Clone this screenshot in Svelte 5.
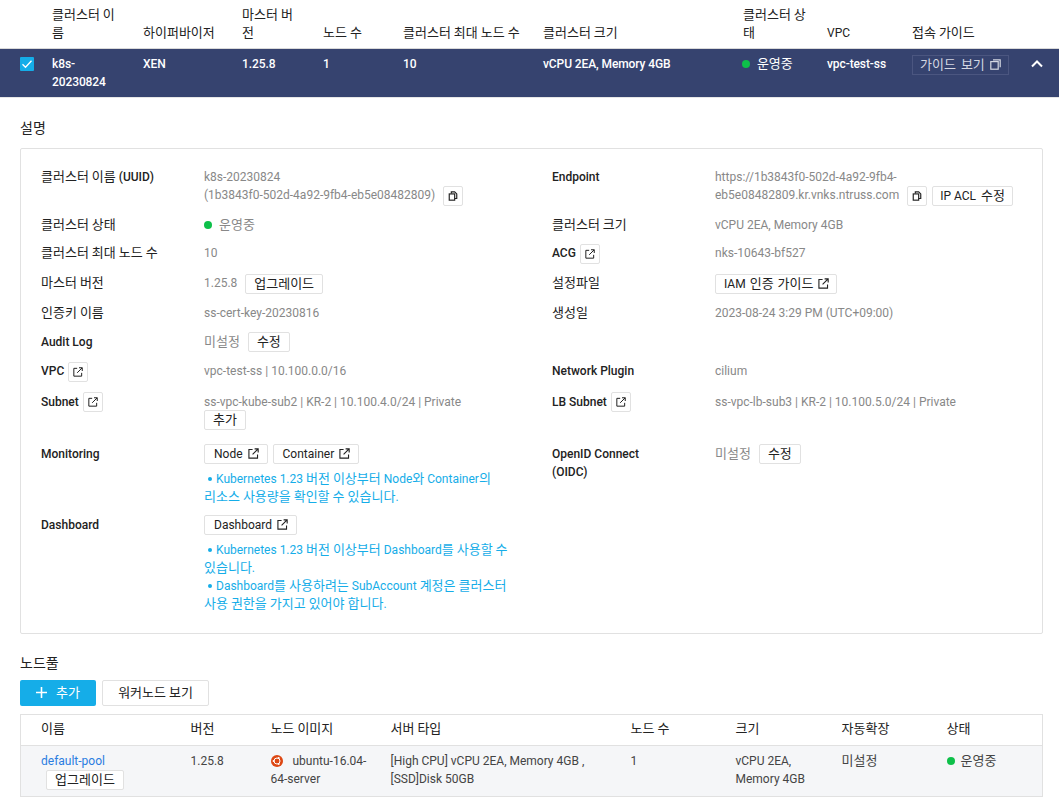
<script>
  const columns = [
    { label: '클러스터 이름', value: 'k8s-20230824' },
    { label: '하이퍼바이저', value: 'XEN' },
    { label: '마스터 버전', value: '1.25.8' },
    { label: '노드 수', value: '1' },
    { label: '클러스터 최대 노드 수', value: '10', cls: 'nowrap' },
    { label: '클러스터 크기', value: 'vCPU 2EA, Memory 4GB' }
  ];

  const poolColumns = ['이름', '버전', '노드 이미지', '서버 타입', '노드 수', '크기', '자동확장', '상태'];

  // hangul sits a bit larger than latin in this UI, so it gets its own span
  const hangul = /([\uac00-\ud7a3]+)/;
  const runs = (text) => text.split(hangul).filter(Boolean);
</script>

{#snippet t(text)}{#each runs(text) as part}{#if hangul.test(part)}<span class="ko">{part}</span>{:else}{part}{/if}{/each}{/snippet}

{#snippet copyIcon()}
  <svg class="ico" viewBox="0 0 12 12" fill="none" stroke="currentColor" stroke-width="1.4">
    <path d="M4 3V1h4l2.5 2.5V9H8" />
    <rect x="1.5" y="3.5" width="6.5" height="7.5" />
  </svg>
{/snippet}

{#snippet linkIcon()}
  <svg class="ico" viewBox="0 0 12 12" fill="none" stroke="currentColor" stroke-width="1.2">
    <path d="M5 1.6H1v9.4h9.4V7" />
    <path d="M5 7l6-6M7.2 .9h3.9v3.9" />
  </svg>
{/snippet}

<div class="page">
  <table class="clusters">
    <colgroup>
      <col style="width:52px" /><col style="width:91px" /><col style="width:99px" /><col style="width:81px" />
      <col style="width:80px" /><col style="width:140px" /><col style="width:200px" /><col style="width:84px" />
      <col style="width:85px" /><col style="width:100px" /><col />
    </colgroup>
    <thead>
      <tr>
        <th></th>
        {#each columns as col}
          <th class={col.cls}>{@render t(col.label)}</th>
        {/each}
        <th class="tight">{@render t('클러스터 상태')}</th>
        <th>VPC</th>
        <th class="nowrap">{@render t('접속 가이드')}</th>
        <th></th>
      </tr>
    </thead>
    <tbody>
      <tr>
        <td class="check-cell">
          <span class="check">
            <svg width="14" height="14" viewBox="0 0 14 14" fill="none" stroke="#fff" stroke-width="1.3"><path d="M2.5 7.2l3 3 6-6.4" /></svg>
          </span>
        </td>
        {#each columns as col}
          <td>{col.value}</td>
        {/each}
        <td class="status-cell"><span class="dot"></span>{@render t('운영중')}</td>
        <td>vpc-test-ss</td>
        <td class="nowrap">
          <button class="guide">{@render t('가이드 보기')}
            <svg width="11" height="11" viewBox="0 0 11 11" fill="none" stroke="currentColor" stroke-width="1.2"><rect x=".8" y="2.6" width="7.4" height="7.6" /><path d="M3 .8h7.2v7.4" /></svg>
          </button>
        </td>
        <td class="chevron">
          <svg width="12" height="8" viewBox="0 0 12 8" fill="none" stroke="#fff" stroke-width="2"><path d="M1 6.5l5-5 5 5" /></svg>
        </td>
      </tr>
    </tbody>
  </table>

  <section class="content">
    <h2 class="title first">설명</h2>
    <div class="panel">
      <div class="label">{@render t('클러스터 이름 (UUID)')}</div>
      <div class="value wrap">k8s-20230824<br />(1b3843f0-502d-4a92-9fb4-eb5e08482809) <button class="btn icon-btn">{@render copyIcon()}</button></div>
      <div class="label">Endpoint</div>
      <div class="value">https://1b3843f0-502d-4a92-9fb4-<br />eb5e08482809.kr.vnks.ntruss.com <button class="btn icon-btn">{@render copyIcon()}</button><button class="btn acl">{@render t('IP ACL 수정')}</button></div>

      <div class="label">{@render t('클러스터 상태')}</div>
      <div class="value"><span class="dot"></span>{@render t('운영중')}</div>
      <div class="label">{@render t('클러스터 크기')}</div>
      <div class="value">vCPU 2EA, Memory 4GB</div>

      <div class="label">{@render t('클러스터 최대 노드 수')}</div>
      <div class="value">10</div>
      <div class="label">ACG <button class="btn icon-btn">{@render linkIcon()}</button></div>
      <div class="value">nks-10643-bf527</div>

      <div class="label">{@render t('마스터 버전')}</div>
      <div class="value">1.25.8 <button class="btn">{@render t('업그레이드')}</button></div>
      <div class="label">{@render t('설정파일')}</div>
      <div class="value"><button class="btn flush iam">{@render t('IAM 인증 가이드')} {@render linkIcon()}</button></div>

      <div class="label">{@render t('인증키 이름')}</div>
      <div class="value">ss-cert-key-20230816</div>
      <div class="label">{@render t('생성일')}</div>
      <div class="value">2023-08-24 3:29 PM (UTC+09:00)</div>

      <div class="label">Audit Log</div>
      <div class="value">{@render t('미설정')} <button class="btn up">{@render t('수정')}</button></div>
      <div class="label"></div>
      <div class="value"></div>

      <div class="label">VPC <button class="btn icon-btn">{@render linkIcon()}</button></div>
      <div class="value">vpc-test-ss | 10.100.0.0/16</div>
      <div class="label">Network Plugin</div>
      <div class="value">cilium</div>

      <div class="label">Subnet <button class="btn icon-btn up">{@render linkIcon()}</button></div>
      <div class="value">ss-vpc-kube-sub2 | KR-2 | 10.100.4.0/24 | Private<br /><button class="btn flush up">{@render t('추가')}</button></div>
      <div class="label">LB Subnet <button class="btn icon-btn up">{@render linkIcon()}</button></div>
      <div class="value">ss-vpc-lb-sub3 | KR-2 | 10.100.5.0/24 | Private</div>

      <div class="label">Monitoring</div>
      <div class="value">
        <div class="btn-row">
          <button class="btn up">Node {@render linkIcon()}</button>
          <button class="btn up">Container {@render linkIcon()}</button>
        </div>
        <p class="note"><span class="bullet"></span>{@render t('Kubernetes 1.23 버전 이상부터 Node와 Container의 리소스 사용량을 확인할 수 있습니다.')}</p>
      </div>
      <div class="label">OpenID Connect<br />(OIDC)</div>
      <div class="value">{@render t('미설정')} <button class="btn up">{@render t('수정')}</button></div>

      <div class="label">Dashboard</div>
      <div class="value">
        <div class="btn-row">
          <button class="btn up">Dashboard {@render linkIcon()}</button>
        </div>
        <p class="note"><span class="bullet"></span>{@render t('Kubernetes 1.23 버전 이상부터 Dashboard를 사용할 수 있습니다.')}<br /><span class="bullet"></span>{@render t('Dashboard를 사용하려는 SubAccount 계정은 클러스터 사용 권한을 가지고 있어야 합니다.')}</p>
      </div>
      <div class="label"></div>
      <div class="value"></div>
    </div>

    <h2 class="title pool-title">노드풀</h2>
    <div class="actions">
      <button class="add">
        <svg width="11" height="11" viewBox="0 0 11 11" stroke="#fff" stroke-width="1.6"><path d="M5.5 0v11M0 5.5h11" /></svg>
        {@render t('추가')}
      </button>
      <button class="secondary">{@render t('워커노드 보기')}</button>
    </div>

    <table class="pools">
      <colgroup>
        <col style="width:150px" /><col style="width:80px" /><col style="width:120px" /><col style="width:240px" />
        <col style="width:105px" /><col style="width:106px" /><col style="width:105px" /><col />
      </colgroup>
      <thead>
        <tr>
          {#each poolColumns as name}
            <th>{@render t(name)}</th>
          {/each}
        </tr>
      </thead>
      <tbody>
        <tr>
          <td>
            <a href="#pool">default-pool</a>
            <button class="btn upgrade">{@render t('업그레이드')}</button>
          </td>
          <td>1.25.8</td>
          <td>
            <svg class="ubuntu" width="12" height="12" viewBox="0 0 12 12">
              <circle cx="6" cy="6" r="6" fill="#dd4814" />
              <circle cx="6" cy="6" r="3" fill="none" stroke="#fff" stroke-width="1" />
              <circle cx="2.6" cy="6" r="1" fill="#fff" />
              <circle cx="7.7" cy="3" r="1" fill="#fff" />
              <circle cx="7.7" cy="9" r="1" fill="#fff" />
            </svg>
            ubuntu-16.04-64-server
          </td>
          <td>[High CPU] vCPU 2EA, Memory 4GB , [SSD]Disk 50GB</td>
          <td>1</td>
          <td>vCPU 2EA, Memory 4GB</td>
          <td>{@render t('미설정')}</td>
          <td><span class="dot pool-dot"></span>{@render t('운영중')}</td>
        </tr>
      </tbody>
    </table>
  </section>
</div>

<style>
  :global(body) {
    margin: 0;
    background: #fff;
  }

  .page {
    font-family: Roboto, "Noto Sans CJK KR", sans-serif;
    font-size: 12px;
    line-height: 18px;
    color: #222;
    width: 1059px;
  }

  .ko {
    font-size: 13px;
    font-weight: 400;
    line-height: 1;
  }

  table {
    border-collapse: collapse;
    table-layout: fixed;
  }

  .clusters {
    width: 1059px;
  }

  .clusters th {
    height: 48px;
    padding: 5px 23px 6px 0;
    box-sizing: border-box;
    font-weight: 400;
    text-align: left;
    vertical-align: bottom;
    color: #222;
  }

  .clusters th.tight {
    padding-right: 20px;
  }

  .clusters th.nowrap,
  .clusters td.nowrap {
    padding-right: 0;
    white-space: nowrap;
  }

  .clusters thead tr {
    border-bottom: 1px solid #d9d9d9;
  }

  .clusters tbody tr {
    background: #36436f;
    color: #fff;
    height: 48px;
    border-bottom: 1px solid #e6e6e6;
  }

  .clusters td {
    vertical-align: top;
    padding: 6px 20px 6px 0;
    font-weight: 500;
    letter-spacing: -0.1px;
  }

  .clusters .check-cell {
    padding-left: 20px;
    padding-right: 0;
  }

  .check {
    display: flex;
    align-items: center;
    justify-content: center;
    width: 14px;
    height: 14px;
    margin-top: 2px;
    background: #15ade8;
    border-radius: 1px;
  }

  .dot {
    display: inline-block;
    width: 8px;
    height: 8px;
    margin-right: 7px;
    border-radius: 50%;
    background: #0ec04a;
  }

  .status-cell .dot {
    margin-left: -1px;
  }

  .pool-dot {
    margin-right: 6px;
  }

  .guide {
    display: inline-flex;
    align-items: center;
    gap: 5px;
    height: 20px;
    padding: 0 7px;
    background: transparent;
    border: 1px solid #4b5680;
    color: #d4d7e2;
    font: inherit;
    font-weight: 400;
    letter-spacing: 0;
    white-space: nowrap;
  }

  .clusters .chevron {
    padding: 11px 0 0 19px;
  }

  .chevron svg {
    display: block;
  }

  .content {
    padding: 0 16px 0 20px;
  }

  .title {
    margin: 0;
    font-size: 14px;
    font-weight: 400;
    line-height: 18px;
  }

  .first {
    padding-top: 21px;
    margin-bottom: 11px;
  }

  .pool-title {
    margin-top: 20px;
  }

  .panel {
    display: grid;
    grid-template-columns: 163px 348px 163px 1fr;
    grid-template-rows: 48px 28px 30px 30px 29px 29px 31px 52px 71px auto;
    padding: 19px 20px 20px;
    border: 1px solid #e1e1e1;
    border-radius: 2px;
  }

  .label {
    font-weight: 500;
    color: #222;
  }

  .value {
    color: #888;
    padding-right: 30px;
  }

  .panel > .value:nth-child(4n + 4) {
    padding-right: 0;
  }

  .btn {
    display: inline-flex;
    align-items: center;
    gap: 5px;
    height: 20px;
    padding: 0 8px;
    margin-left: 5px;
    vertical-align: top;
    box-sizing: border-box;
    background: #fff;
    border: 1px solid #e1e1e1;
    border-radius: 2px;
    font: inherit;
    font-weight: 400;
    color: #222;
    white-space: nowrap;
  }

  .btn.up {
    margin-top: -1px;
  }

  .btn:has(.ico) {
    padding: 0 8px 0 9px;
  }

  .btn .ico {
    width: 11px;
    height: 11px;
  }

  .btn.icon-btn {
    width: 20px;
    padding: 0;
    justify-content: center;
  }

  .btn.icon-btn .ico {
    width: 10px;
    height: 10px;
  }

  .btn.acl {
    padding: 0 7px;
  }

  .btn.iam {
    padding: 0 7px 0 8px;
    gap: 4px;
  }

  .label .btn {
    margin-left: 1px;
  }

  .btn.flush {
    margin-left: 0;
  }

  .btn-row {
    display: flex;
    gap: 5px;
  }

  .btn-row .btn {
    margin-left: 0;
  }

  .note {
    margin: 6px 0 0;
    color: #15ade8;
    word-break: keep-all;
  }

  .bullet {
    display: inline-block;
    width: 4px;
    height: 4px;
    margin: 0 4px 2px 4px;
    border-radius: 50%;
    background: #15ade8;
  }

  .actions {
    display: flex;
    gap: 6px;
    margin: 8px 0;
  }

  .add,
  .secondary {
    height: 26px;
    box-sizing: border-box;
    border-radius: 2px;
    font: inherit;
  }

  .add {
    display: inline-flex;
    align-items: center;
    gap: 9px;
    width: 76px;
    padding: 0 0 0 16px;
    background: #15ade8;
    border: 0;
    color: #fff;
  }

  .secondary {
    width: 107px;
    padding: 0;
    background: #fff;
    border: 1px solid #e1e1e1;
    color: #222;
  }

  .pools {
    width: 100%;
    border: 1px solid #e1e1e1;
  }

  .pools th {
    height: 31px;
    padding: 0 0 1px 20px;
    box-sizing: border-box;
    font-weight: 500;
    text-align: left;
    border-bottom: 1px solid #e1e1e1;
  }

  .pools td {
    padding: 6px 0 6px 20px;
    vertical-align: top;
    background: #f5f6f8;
    color: #444;
  }

  .pools a {
    color: #2a7de1;
    text-decoration: none;
  }

  .btn.upgrade {
    display: flex;
    width: 78px;
    margin: 0 0 0 5px;
    justify-content: center;
  }

  .ubuntu {
    margin-right: 7px;
    vertical-align: -2px;
  }
</style>
